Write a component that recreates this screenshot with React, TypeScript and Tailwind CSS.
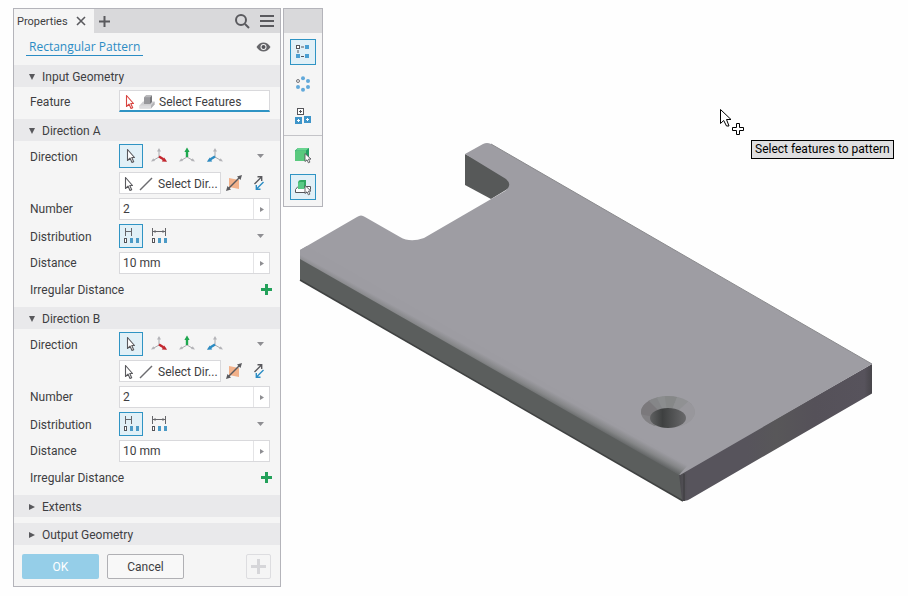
import { useId, useState } from 'react';
import type { ReactNode } from 'react';
import clsx from 'clsx';

type Axis = 'x' | 'y' | 'z';

const AXIS_COLORS: Record<Axis, string> = { x: '#c4262e', y: '#1fa84f', z: '#2b8cc4' };

const AXIS_LABELS: Record<Axis, string> = { x: 'X axis', y: 'Y axis', z: 'Z axis' };

/* ---------- Icons ---------- */

function PointerIcon({ color = '#5a5a5e' }: { color?: string }) {
  return (
    <svg width="10" height="16" viewBox="0 0 10 16" className="shrink-0">
      <path
        d="M1.500 1.500v11l2.500-2.400 2 4.400 1.700-.8-1.900-4.200h2.700z"
        fill="#fff"
        stroke={color}
        strokeWidth="1.100"
        strokeLinejoin="round"
      />
    </svg>
  );
}

function AxisIcon({ axis }: { axis: Axis }) {
  const color = AXIS_COLORS[axis];
  return (
    <svg width="18" height="18" viewBox="0 0 18 18" fill="none">
      <path d="M9 10V3M9 10l-6 3.500M9 10l6 3.500" stroke="#aaaaae" />
      <path d="M9 1L7 4.500h4zM1 14.500l4-.6-1.700-2.700zM17 14.500l-4-.6 1.700-2.700z" fill="#b4b4b8" />
      {axis === 'x' && (
        <>
          <path d="M9 9.500l4.500 2.700" stroke={color} strokeWidth="2.400" />
          <path d="M17 14.800l-5.200-.4 2.400-4z" fill={color} />
        </>
      )}
      {axis === 'y' && (
        <>
          <path d="M9 10V4" stroke={color} strokeWidth="2.400" />
          <path d="M9 .5L6.400 5h5.200z" fill={color} />
        </>
      )}
      {axis === 'z' && (
        <>
          <path d="M9 9.500l-4.500 2.700" stroke={color} strokeWidth="2.400" />
          <path d="M1 14.800l5.200-.4-2.400-4z" fill={color} />
        </>
      )}
    </svg>
  );
}

function FeatureIcon() {
  return (
    <svg width="16" height="16" viewBox="0 0 16 16">
      <path d="M.5 11.500L4 7.500h11.500v3L12 14.500H.5z" fill="#cfcfd2" />
      <path d="M.5 11.500H12v3H.5z" fill="#dcdcdf" />
      <path d="M12 11.500l3.500-4v3l-3.500 4z" fill="#b2b2b5" />
      <path d="M5 3.500l2-2h6v6.500l-2 2H5z" fill="#77777b" />
      <path d="M5 3.500h6V10H5z" fill="#98989c" />
      <path d="M5 3.500l2-2h6l-2 2z" fill="#b8b8bb" />
    </svg>
  );
}

function LineIcon() {
  return (
    <svg width="14" height="14" viewBox="0 0 14 14" stroke="#6c6c70" strokeWidth="1.500" className="shrink-0">
      <path d="M1 13L13 1" />
    </svg>
  );
}

function MidplaneIcon() {
  return (
    <svg width="18" height="18" viewBox="0 0 18 18">
      <path d="M4 4l10 2v9L4 13z" fill="#f2b18a" />
      <path d="M3 15L15 3" stroke="#5a5a5e" strokeWidth="1.500" />
      <path d="M17 1l-5 1.500 3.500 3.500zM1 17l1.500-5 3.500 3.500z" fill="#5a5a5e" />
    </svg>
  );
}

function FlipIcon() {
  return (
    <svg width="12" height="16" viewBox="0 0 12 16" fill="none" strokeWidth="1.400">
      <path d="M1.500 9L8.500 2M4.500 1.700h4.200v4.200" stroke="#5a5a5e" />
      <path d="M10.500 7l-7 7M3.300 10v4.300h4.200" stroke="#2b8cc4" />
    </svg>
  );
}

function SpacingIcon({ wide = false }: { wide?: boolean }) {
  return (
    <svg width="16" height="16" viewBox="0 0 16 16" fill="none">
      {wide ? (
        <>
          <path d="M1.500 0v8M14.500 0v8M2 3.500h12" stroke="#66666a" />
          <path d="M2 3.500L4.500 2v3zM14 3.500L11.500 2v3z" fill="#66666a" />
        </>
      ) : (
        <>
          <path d="M2.500 0v8M8.500 0v8M3 3.500h5" stroke="#66666a" />
        </>
      )}
      <rect x="1.500" y="10.500" width="2" height="4" stroke="#55555a" fill="#fff" />
      <rect x="7" y="10" width="3" height="5" fill="#4b9ac6" />
      <rect x="13" y="10" width="3" height="5" fill="#4b9ac6" />
    </svg>
  );
}

function PlusIcon({ size, thickness }: { size: number; thickness: number }) {
  const half = size / 2;
  return (
    <svg width={size} height={size} viewBox={`0 0 ${size} ${size}`} stroke="currentColor" strokeWidth={thickness}>
      <path d={`M${half} 0v${size}M0 ${half}h${size}`} />
    </svg>
  );
}

function Triangle({ down = false }: { down?: boolean }) {
  return (
    <svg width="8" height="8" viewBox="0 0 8 8" fill="currentColor" className="shrink-0">
      {down ? <path d="M1 1h6L4 7z" /> : <path d="M1 1l6 3-6 3z" />}
    </svg>
  );
}

function RectPatternIcon() {
  return (
    <svg width="16" height="16" viewBox="0 0 16 16" fill="none">
      <path d="M6 3h3M3 6v3M6 12.500h3" stroke="#55555a" />
      <rect x="1.500" y="1.500" width="3" height="3" stroke="#55555a" fill="#fff" />
      <rect x="10" y="1" width="4" height="4" fill="#4b9fd2" />
      <rect x="1" y="10" width="4" height="4" fill="#4b9fd2" />
      <rect x="10" y="10" width="4" height="4" fill="#4b9fd2" />
    </svg>
  );
}

function CircPatternIcon() {
  return (
    <svg width="16" height="16" viewBox="0 0 16 16" fill="#62a9da">
      <circle cx="3" cy="5" r="1.500" fill="#eee" stroke="#77777b" />
      <circle cx="8" cy="2.200" r="2" />
      <circle cx="13" cy="5" r="2" />
      <circle cx="3" cy="11" r="2" />
      <circle cx="8" cy="13.800" r="2" />
      <circle cx="13" cy="11" r="2" />
    </svg>
  );
}

function SketchPatternIcon() {
  return (
    <svg width="16" height="16" viewBox="0 0 16 16" fill="none">
      <rect x="2.500" y=".5" width="6" height="6" fill="#fff" stroke="#55555a" />
      <path d="M5.500 2v3M4 3.500h3" stroke="#55555a" />
      <rect y="9" width="7" height="7" fill="#3f95c9" />
      <rect x="9" y="8" width="7" height="7" fill="#3f95c9" />
      <path d="M3.500 11v3M2 12.500h3M12.500 10v3M11 11.500h3" stroke="#fff" />
    </svg>
  );
}

function SolidIcon({ onBase = false }: { onBase?: boolean }) {
  return (
    <svg width="18" height="18" viewBox="0 0 18 18">
      {onBase ? (
        <>
          <path d="M1.500 11.500L4 8.500h12.500v3l-3 3h-12z" fill="#fff" stroke="#55555a" />
          <path d="M4 11V5.500C4 3 5 2 7 2h5v6l-2 3z" fill="#2fa961" />
          <path d="M4 11V6c0-1 .6-2 2-2h4v7z" fill="#58c985" />
        </>
      ) : (
        <>
          <path d="M1 15V4.500L4 2h11v10.500L12 15z" fill="#239e63" />
          <path d="M1 15V6c0-1 .6-1.500 1.500-1.500H12V15z" fill="#5ac97e" />
          <path d="M2 4.500L4 2h11l-3 2.500z" fill="#6ad490" />
        </>
      )}
      <path
        d="M11 7.500v8l2-1.700 1.400 3 1.500-.7-1.400-3H17z"
        fill="#fff"
        stroke="#55555a"
        strokeWidth=".9"
      />
    </svg>
  );
}

function EyeIcon() {
  return (
    <svg width="15" height="10" viewBox="0 0 15 10">
      <path
        d="M.5 5C2.500 1.800 4.800.5 7.500.5S12.500 1.800 14.500 5C12.500 8.200 10.200 9.500 7.500 9.500S2.500 8.200.5 5z"
        fill="#66666a"
      />
      <circle cx="7.500" cy="5" r="3" fill="#f5f5f5" />
      <circle cx="7.500" cy="5" r="2" fill="#55555a" />
    </svg>
  );
}

/* ---------- Form parts ---------- */

interface ToggleProps {
  label: string;
  active?: boolean;
  onClick?: () => void;
  children: ReactNode;
}

function Toggle({ label, active = false, onClick, children }: ToggleProps) {
  return (
    <button
      aria-label={label}
      aria-pressed={active}
      onClick={onClick}
      className={clsx(
        'flex size-6 items-center justify-center border',
        active ? 'border-[#2f94c4] bg-[#e1f0f7]' : 'border-transparent'
      )}
    >
      {children}
    </button>
  );
}

function Row({ label, children }: { label: string; children: ReactNode }) {
  return (
    <div role="group" aria-label={label || 'Selection'} className="flex items-center">
      <span className="w-[89px] shrink-0 pt-0.5">{label}</span>
      {children}
    </div>
  );
}

function MoreButton({ label }: { label: string }) {
  return (
    <button aria-label={label} className="mr-1.5 ml-auto text-[#8e8e92]">
      <svg width="7" height="4" viewBox="0 0 7 4" fill="currentColor">
        <path d="M0 0h7L3.500 4z" />
      </svg>
    </button>
  );
}

function ValueField({ label, defaultValue }: { label: string; defaultValue: string }) {
  const id = useId();
  return (
    <div className="flex items-center">
      <label htmlFor={id} className="w-[89px] shrink-0">
        {label}
      </label>
      <div className="flex h-[22px] min-w-0 flex-1 border border-[#d9d9dc] bg-white">
        <input id={id} defaultValue={defaultValue} className="w-0 min-w-0 flex-1 px-[3px] outline-none" />
        <button
          aria-label={`${label} options`}
          className="flex w-4 items-center justify-center border-l border-[#e4e4e6] text-[#8e8e92]"
        >
          <svg width="4" height="5" viewBox="0 0 4 5" fill="currentColor">
            <path d="M0 0l4 2.500L0 5z" />
          </svg>
        </button>
      </div>
    </div>
  );
}

interface SectionProps {
  title: string;
  defaultOpen?: boolean;
  children?: ReactNode;
}

function Section({ title, defaultOpen = false, children }: SectionProps) {
  const [open, setOpen] = useState(defaultOpen);
  return (
    <section>
      <button
        aria-expanded={open}
        onClick={() => setOpen(!open)}
        className="flex h-[22px] w-full items-center gap-1.5 bg-[#e9e9eb] pt-px pl-3.5 text-left"
      >
        <span className="text-[#58585c]">
          <Triangle down={open} />
        </span>
        {title}
      </button>
      {open && children}
    </section>
  );
}

function DirectionSection({ title }: { title: string }) {
  const [source, setSource] = useState('pick');
  const [spacing, setSpacing] = useState('increment');

  return (
    <Section title={title} defaultOpen>
      <div className="flex flex-col gap-1 pt-[3px] pr-[10px] pb-[5px] pl-4">
        <Row label="Direction">
          <div className="flex gap-1">
            <Toggle label="Pick" active={source === 'pick'} onClick={() => setSource('pick')}>
              <PointerIcon />
            </Toggle>
            {(['x', 'y', 'z'] as Axis[]).map((axis) => (
              <Toggle
                key={axis}
                label={AXIS_LABELS[axis]}
                active={source === axis}
                onClick={() => setSource(axis)}
              >
                <AxisIcon axis={axis} />
              </Toggle>
            ))}
          </div>
          <MoreButton label="More directions" />
        </Row>
        <Row label="">
          <button className="flex h-[22px] min-w-0 flex-1 items-center gap-[5px] border border-[#d9d9dc] bg-white pt-px pl-1">
            <PointerIcon />
            <LineIcon />
            <span className="whitespace-nowrap">Select Dir...</span>
          </button>
          <button aria-label="Midplane" className="ml-1">
            <MidplaneIcon />
          </button>
          <button aria-label="Flip" className="mr-[5px] ml-2.5">
            <FlipIcon />
          </button>
        </Row>
        <ValueField label="Number" defaultValue="2" />
        <Row label="Distribution">
          <div className="flex gap-1">
            <Toggle
              label="Incremental"
              active={spacing === 'increment'}
              onClick={() => setSpacing('increment')}
            >
              <SpacingIcon />
            </Toggle>
            <Toggle label="Fitted" active={spacing === 'fit'} onClick={() => setSpacing('fit')}>
              <SpacingIcon wide />
            </Toggle>
          </div>
          <MoreButton label="More distributions" />
        </Row>
        <ValueField label="Distance" defaultValue="10 mm" />
        <div className="flex h-6 items-center justify-between">
          Irregular Distance
          <button aria-label="Add irregular distance" className="-mr-0.5 pb-0.5 text-[#23a15a]">
            <PlusIcon size={11} thickness={3} />
          </button>
        </div>
      </div>
    </Section>
  );
}

/* ---------- Panels ---------- */

function PropertiesPanel() {
  return (
    <aside className="w-[268px] shrink-0 border border-[#b4b4ba] bg-[#f5f5f5]">
      <div className="flex h-6 items-center bg-[#d9d9db] text-[#5a5a5e]">
        <div className="flex h-full items-center gap-2 bg-[#f5f5f5] pr-2 pl-[3px]">
          <span className="pt-px text-[11px] text-[#3e3e42]">Properties</span>
          <button aria-label="Close">
            <svg width="10" height="10" viewBox="0 0 10 10" stroke="currentColor" strokeWidth="1.600">
              <path d="M1 1l8 8M9 1L1 9" />
            </svg>
          </button>
        </div>
        <button aria-label="New tab" className="ml-[5px]">
          <PlusIcon size={11} thickness={2} />
        </button>
        <button aria-label="Search" className="ml-auto">
          <svg width="16" height="16" viewBox="0 0 16 16" fill="none" stroke="currentColor" strokeWidth="2">
            <circle cx="7" cy="7" r="5" />
            <path d="M11 11l4 4" />
          </svg>
        </button>
        <button aria-label="Menu" className="mr-1.5 ml-2.5">
          <svg width="14" height="12" viewBox="0 0 14 12" stroke="currentColor" strokeWidth="2">
            <path d="M0 1h14M0 6h14M0 11h14" />
          </svg>
        </button>
      </div>

      <div className="flex h-8 items-center justify-between pr-[9px] pb-1 pl-3">
        <a
          href="#pattern"
          className="border-b border-[#2b8cc4] px-[3px] font-['Open_Sans','Noto_Sans',sans-serif] text-[#2b8cc4]"
        >
          Rectangular Pattern
        </a>
        <button aria-label="Toggle preview">
          <EyeIcon />
        </button>
      </div>

      <Section title="Input Geometry" defaultOpen>
        <div className="pt-[3px] pr-[10px] pb-[7px] pl-4">
          <Row label="Feature">
            <button className="flex h-[22px] min-w-0 flex-1 items-center gap-1 border border-b-2 border-[#d9d9dc] border-b-[#2f94c4] bg-white pt-0.5 pl-[5px]">
              <PointerIcon color="#d8433f" />
              <FeatureIcon />
              Select Features
            </button>
          </Row>
        </div>
      </Section>
      <DirectionSection title="Direction A" />
      <DirectionSection title="Direction B" />
      <div className="flex flex-col gap-1.5">
        <Section title="Extents" />
        <Section title="Output Geometry" />
      </div>

      <div className="flex gap-2 px-2 pt-[9px] pb-[7px]">
        <button disabled className="h-[25px] w-[77px] rounded-xs bg-[#95cee8] text-white">
          OK
        </button>
        <button className="h-[25px] w-[77px] rounded-xs border border-[#b0b0b4] bg-[#f8f8f8]">Cancel</button>
        <button
          disabled
          aria-label="Apply and create new"
          className="mr-px ml-auto flex size-[25px] items-center justify-center rounded-xs border border-[#dddde0] text-[#d6d6d9]"
        >
          <PlusIcon size={15} thickness={3} />
        </button>
      </div>
    </aside>
  );
}

const PATTERN_TOOLS = [
  { label: 'Rectangular pattern', icon: RectPatternIcon },
  { label: 'Circular pattern', icon: CircPatternIcon },
  { label: 'Sketch driven pattern', icon: SketchPatternIcon },
];

function ToolPalette() {
  const [tool, setTool] = useState(PATTERN_TOOLS[0].label);
  const [mode, setMode] = useState('features');

  const toolClass = (active: boolean) =>
    clsx(
      'flex size-[26px] items-center justify-center border',
      active ? 'border-[#2f94c4] bg-[#e1f0f7]' : 'border-transparent'
    );

  return (
    <aside className="w-10 shrink-0 border border-[#b4b4ba] bg-[#f5f5f5]">
      <div className="h-6 bg-[#d9d9db]" />
      <div className="flex flex-col items-center gap-1.5 border-b border-[#c4c4c8] py-1.5">
        {PATTERN_TOOLS.map(({ label, icon: Icon }) => (
          <button
            key={label}
            aria-label={label}
            aria-pressed={tool === label}
            onClick={() => setTool(label)}
            className={toolClass(tool === label)}
          >
            <Icon />
          </button>
        ))}
      </div>
      <div className="flex flex-col items-center gap-1.5 py-1.5">
        <button
          aria-label="Pattern solids"
          aria-pressed={mode === 'solids'}
          onClick={() => setMode('solids')}
          className={toolClass(mode === 'solids')}
        >
          <SolidIcon />
        </button>
        <button
          aria-label="Pattern features"
          aria-pressed={mode === 'features'}
          onClick={() => setMode('features')}
          className={toolClass(mode === 'features')}
        >
          <SolidIcon onBase />
        </button>
      </div>
    </aside>
  );
}

/* ---------- Model ---------- */

function PlateModel() {
  return (
    <svg width="580" height="370" viewBox="296 138 580 370" className="absolute top-[138px] left-[296px]">
      <defs>
        <linearGradient id="lip" gradientUnits="userSpaceOnUse" x1="490" y1="358" x2="484" y2="369">
          <stop offset="0" stopColor="#9d9ca2" />
          <stop offset=".5" stopColor="#858688" />
          <stop offset="1" stopColor="#5d6060" />
        </linearGradient>
        <linearGradient id="end" gradientUnits="userSpaceOnUse" x1="680" y1="0" x2="872" y2="0">
          <stop offset="0" stopColor="#4b4a4e" />
          <stop offset=".04" stopColor="#57545c" />
          <stop offset=".35" stopColor="#57545c" />
          <stop offset=".5" stopColor="#585759" />
          <stop offset=".7" stopColor="#555159" />
          <stop offset=".96" stopColor="#57535c" />
          <stop offset="1" stopColor="#47454a" />
        </linearGradient>
        <linearGradient id="bore" x1="0" y1="0" x2="1" y2="0">
          <stop offset="0" stopColor="#606162" />
          <stop offset=".35" stopColor="#3e4040" />
          <stop offset="1" stopColor="#69696b" />
        </linearGradient>
        <clipPath id="sink">
          <ellipse cx="668" cy="412" rx="27" ry="16" />
        </clipPath>
      </defs>

      {/* notch wall */}
      <path d="M465 154v31l26 14 20-12-4-12z" fill="#575959" />

      {/* front and end faces */}
      <path d="M300 252v28l383 221 8-20-10-10z" fill="#5b5e5d" />
      <path d="M300 280l383 221" stroke="#3f4141" strokeWidth="1.500" />
      <path d="M679 474l193-110v29.500L690 499q-4 3-8 1z" fill="url(#end)" />
      <path d="M684 474v27" stroke="#454448" strokeWidth="2" />

      {/* top face */}
      <path
        d="M300 250l57-33q4-3 8 0l35 20q10 6 24 1l81-47q8-6 1-12l-41-25 18-10q4-2 8 0l381 220-192 111z"
        fill="#9e9da3"
      />
      <path d="M300 250l7-4 381 219-9 10L300 259z" fill="url(#lip)" />
      <path d="M491 144l381 220" stroke="#8a8a8d" strokeWidth="1" />

      {/* countersunk hole */}
      <g clipPath="url(#sink)">
        <ellipse cx="668" cy="412" rx="27" ry="16" fill="#929296" />
        <path d="M668 420L640 432V400z" fill="#828184" />
        <path d="M668 420l-28-6v-14l8-5z" fill="#7b797c" />
        <path d="M668 420l-22-22 10-6z" fill="#858688" />
        <path d="M668 420l-14-28 12-2z" fill="#8b8d8e" />
        <path d="M668 420l-4-30h16z" fill="#868888" />
        <path d="M668 420l12-30 16 12z" fill="#909193" />
        <path d="M668 420l24-22 8 32-18 2z" fill="#98979c" />
      </g>
      <ellipse cx="668" cy="418" rx="18" ry="10" fill="url(#bore)" />
    </svg>
  );
}

function CursorHint() {
  return (
    <div className="absolute top-[108px] left-[719px]">
      <svg width="26" height="28" viewBox="0 0 26 28" fill="#fff" stroke="#000" className="block">
        <path d="M1.500 1.500v14l3.200-3 2.800 5.500h2.500l-2.500-6.500h4.500z" />
        <path d="M17.500 15.500h3v4h4v3h-4v4h-3v-4h-4v-3h4z" />
      </svg>
      <div
        role="tooltip"
        className="mt-1 ml-8 border border-black bg-[#dfdfe1] px-[3px] leading-[17px] whitespace-nowrap text-black"
      >
        Select features to pattern
      </div>
    </div>
  );
}

export default function App() {
  return (
    <main className="relative min-h-screen overflow-hidden bg-[#fefefe] font-['Roboto','Noto_Sans',sans-serif] text-[12px] leading-4 text-[#3e3e42]">
      <PlateModel />
      <div className="relative flex items-start gap-0.5 pt-2 pl-[13px]">
        <PropertiesPanel />
        <ToolPalette />
      </div>
      <CursorHint />
    </main>
  );
}
